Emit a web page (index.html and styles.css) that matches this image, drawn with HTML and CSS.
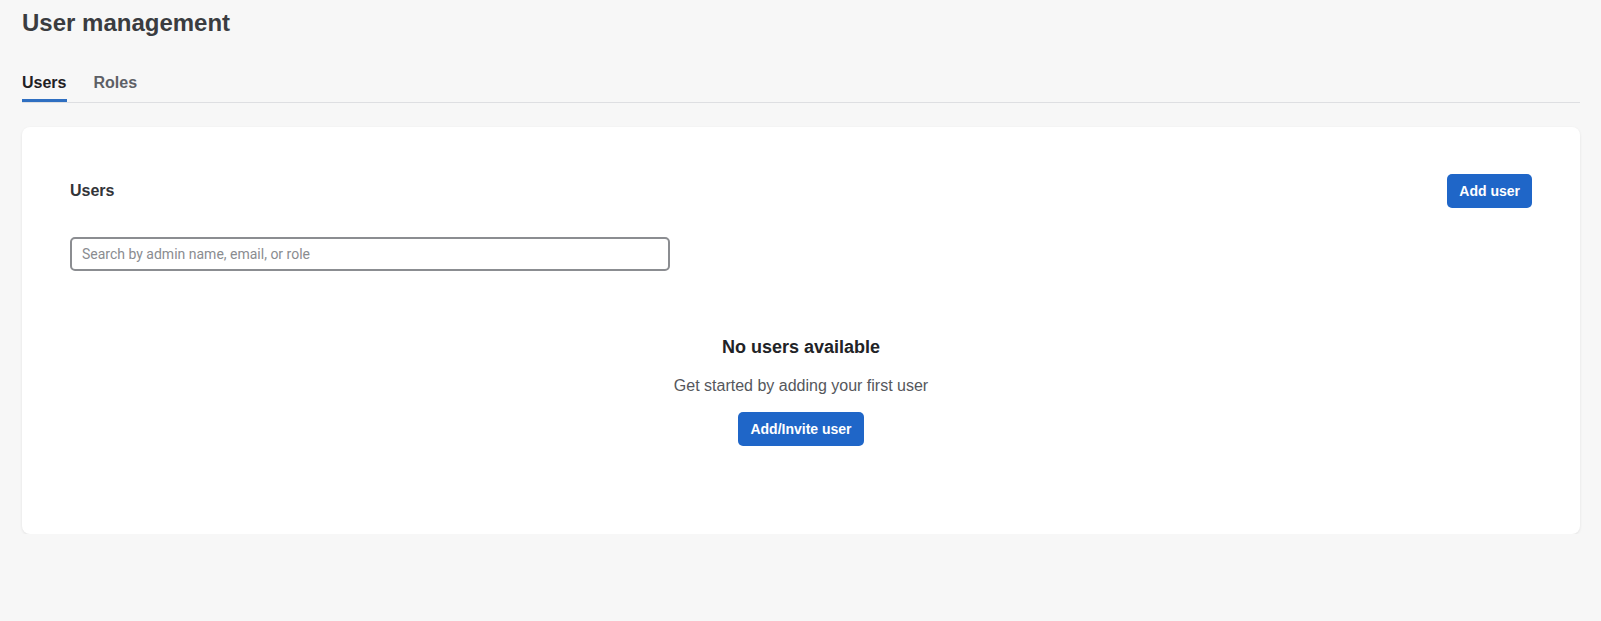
FILE: index.html
```html
<!DOCTYPE html>
<html lang="en">
<head>
  <meta charset="UTF-8">
  <meta name="viewport" content="width=device-width, initial-scale=1.0">
  <title>User management</title>
  <link rel="stylesheet" href="styles.css">
</head>
<body>
  <div class="page">
    <h1 class="page-title">User management</h1>

    <nav class="tabs">
      <a class="tab active" href="#">Users</a>
      <a class="tab" href="#">Roles</a>
    </nav>

    <section class="card">
      <div class="card-header">
        <h2>Users</h2>
        <button class="btn" type="button">Add user</button>
      </div>

      <input class="search" type="text" placeholder="Search by admin name, email, or role">

      <div class="empty-state">
        <h3>No users available</h3>
        <p>Get started by adding your first user</p>
        <button class="btn" type="button">Add/Invite user</button>
      </div>
    </section>
  </div>
</body>
</html>
```

FILE: styles.css
```css
/* Basic Reset */
* {
  margin: 0;
  padding: 0;
  box-sizing: border-box;
}

body {
  font-family: "Liberation Sans", Arial, sans-serif;
  background: #f7f7f7;
  color: #333;
}

.page {
  padding: 7px 21px 0 22px;
}

.page-title {
  font-size: 24px;
  line-height: 32px;
  font-weight: bold;
  color: #3a3c40;
}

/* Tabs */
.tabs {
  display: flex;
  gap: 26px;
  margin-top: 34px;
  border-bottom: 1px solid #dedfe2;
}

.tab {
  font-size: 16px;
  line-height: 20px;
  font-weight: bold;
  color: #5d6066;
  text-decoration: none;
  padding: 0 1px 6px 0;
  border-bottom: 3px solid transparent;
}

.tab.active {
  color: #1f2124;
  border-bottom-color: #2f6fc1;
}

/* Card */
.card {
  margin-top: 24px;
  background: #fff;
  border-radius: 8px;
  box-shadow: 0 1px 3px rgba(0, 0, 0, 0.09);
  padding: 47px 48px 0;
}

.card-header {
  display: flex;
  justify-content: space-between;
  align-items: center;
}

.card-header h2 {
  font-size: 16px;
  font-weight: bold;
  color: #333438;
}

.btn {
  font-family: "Liberation Sans", Arial, sans-serif;
  font-size: 14px;
  line-height: 16px;
  font-weight: bold;
  color: #fff;
  background: #1f66c8;
  border: none;
  border-radius: 5px;
  padding: 9px 12px;
  cursor: pointer;
}

.search {
  display: block;
  width: 600px;
  height: 34px;
  margin-top: 29px;
  padding: 0 10px;
  border: 2px solid #8b8d91;
  border-radius: 5px;
  font-family: Roboto, "Liberation Sans", sans-serif;
  font-size: 14px;
  color: #333;
  outline: none;
}

.search::placeholder {
  color: #8a8c90;
}

/* Empty state */
.empty-state {
  display: flex;
  flex-direction: column;
  align-items: center;
  padding: 64px 0 88px;
}

.empty-state h3 {
  font-size: 18px;
  line-height: 24px;
  font-weight: bold;
  color: #222326;
}

.empty-state p {
  font-size: 16px;
  line-height: 24px;
  color: #55575c;
  margin-top: 15px;
  margin-bottom: 14px;
}
```
